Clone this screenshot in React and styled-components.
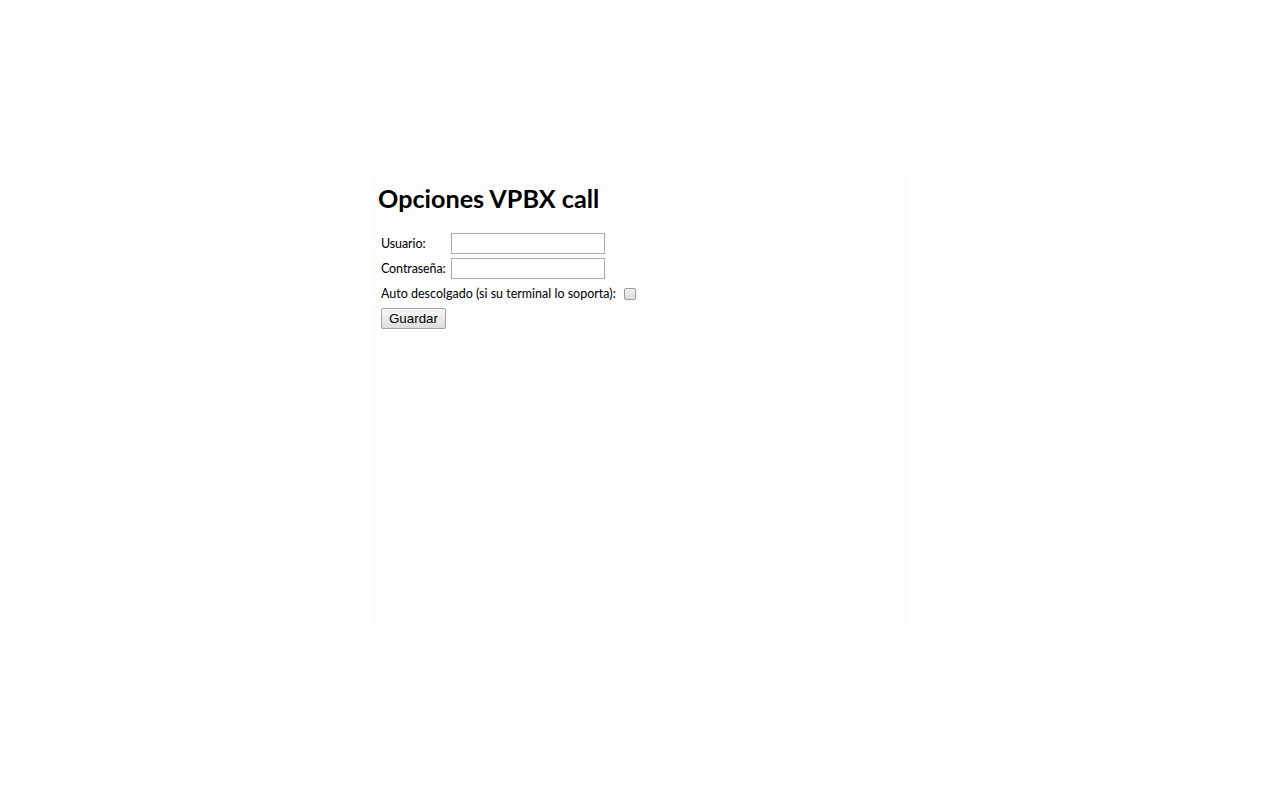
import React from 'react';
import styled, { createGlobalStyle } from 'styled-components';

const GlobalStyle = createGlobalStyle`
  html, body {
    margin: 0;
    padding: 0;
    background: #ffffff;
  }
  body {
    font-family: Lato, "Noto Sans", sans-serif;
    color: #000;
  }
`;

const Page = styled.div`
  min-height: 100vh;
  display: flex;
  align-items: center;
  justify-content: center;
`;

const Panel = styled.div`
  width: 524px;
  height: 448px;
  padding: 5px;
  background: #fdfdfd;
  border-radius: 4px;
`;

const Title = styled.h2`
  margin: 8px 0 18px;
  font-size: 25.2px;
  line-height: 28px;
  font-weight: 700;
`;

const Form = styled.table`
  border-spacing: 2px;
  font-size: 12.5px;
  line-height: 15px;

  td {
    padding: 1px;
    vertical-align: middle;
  }
`;

const LabelCell = styled.td`
  width: 66px;
  max-width: 66px;
  white-space: nowrap;
  letter-spacing: -0.1px;
`;

const TextInput = styled.input`
  box-sizing: border-box;
  width: 154px;
  height: 21px;
  margin: 0;
  padding: 1px 2px;
  border: 1px solid #a9a9a9;
  background: #fff;
  font: 13px "Liberation Sans", Arial, sans-serif;
  display: block;
`;

const CheckLabel = styled.label`
  display: flex;
  align-items: center;
  gap: 8px;
  padding: 3px 0 2px;
`;

const Check = styled.input`
  appearance: none;
  width: 12px;
  height: 12px;
  margin: 0;
  border: 1px solid #9a9a9a;
  border-radius: 2px;
  background: linear-gradient(#eeeeee, #dcdcdc);
`;

const Button = styled.button`
  box-sizing: border-box;
  height: 21px;
  padding: 0 7px;
  margin: 1px 0 0;
  border: 1px solid #a3a3a3;
  border-radius: 2px;
  background: linear-gradient(#f8f8f8, #dddddd);
  font: 13.33px "Liberation Sans", Arial, sans-serif;
  color: #000;
`;

export default function App() {
  return (
    <>
      <GlobalStyle />
      <Page>
        <Panel>
          <Title>Opciones VPBX call</Title>
          <Form>
            <tbody>
              <tr>
                <LabelCell>Usuario:</LabelCell>
                <td><TextInput type="text" /></td>
              </tr>
              <tr>
                <LabelCell>Contraseña:</LabelCell>
                <td><TextInput type="password" /></td>
              </tr>
              <tr>
                <td colSpan={2}>
                  <CheckLabel>
                    Auto descolgado (si su terminal lo soporta):
                    <Check type="checkbox" />
                  </CheckLabel>
                </td>
              </tr>
              <tr>
                <td colSpan={2}><Button type="button">Guardar</Button></td>
              </tr>
            </tbody>
          </Form>
        </Panel>
      </Page>
    </>
  );
}
